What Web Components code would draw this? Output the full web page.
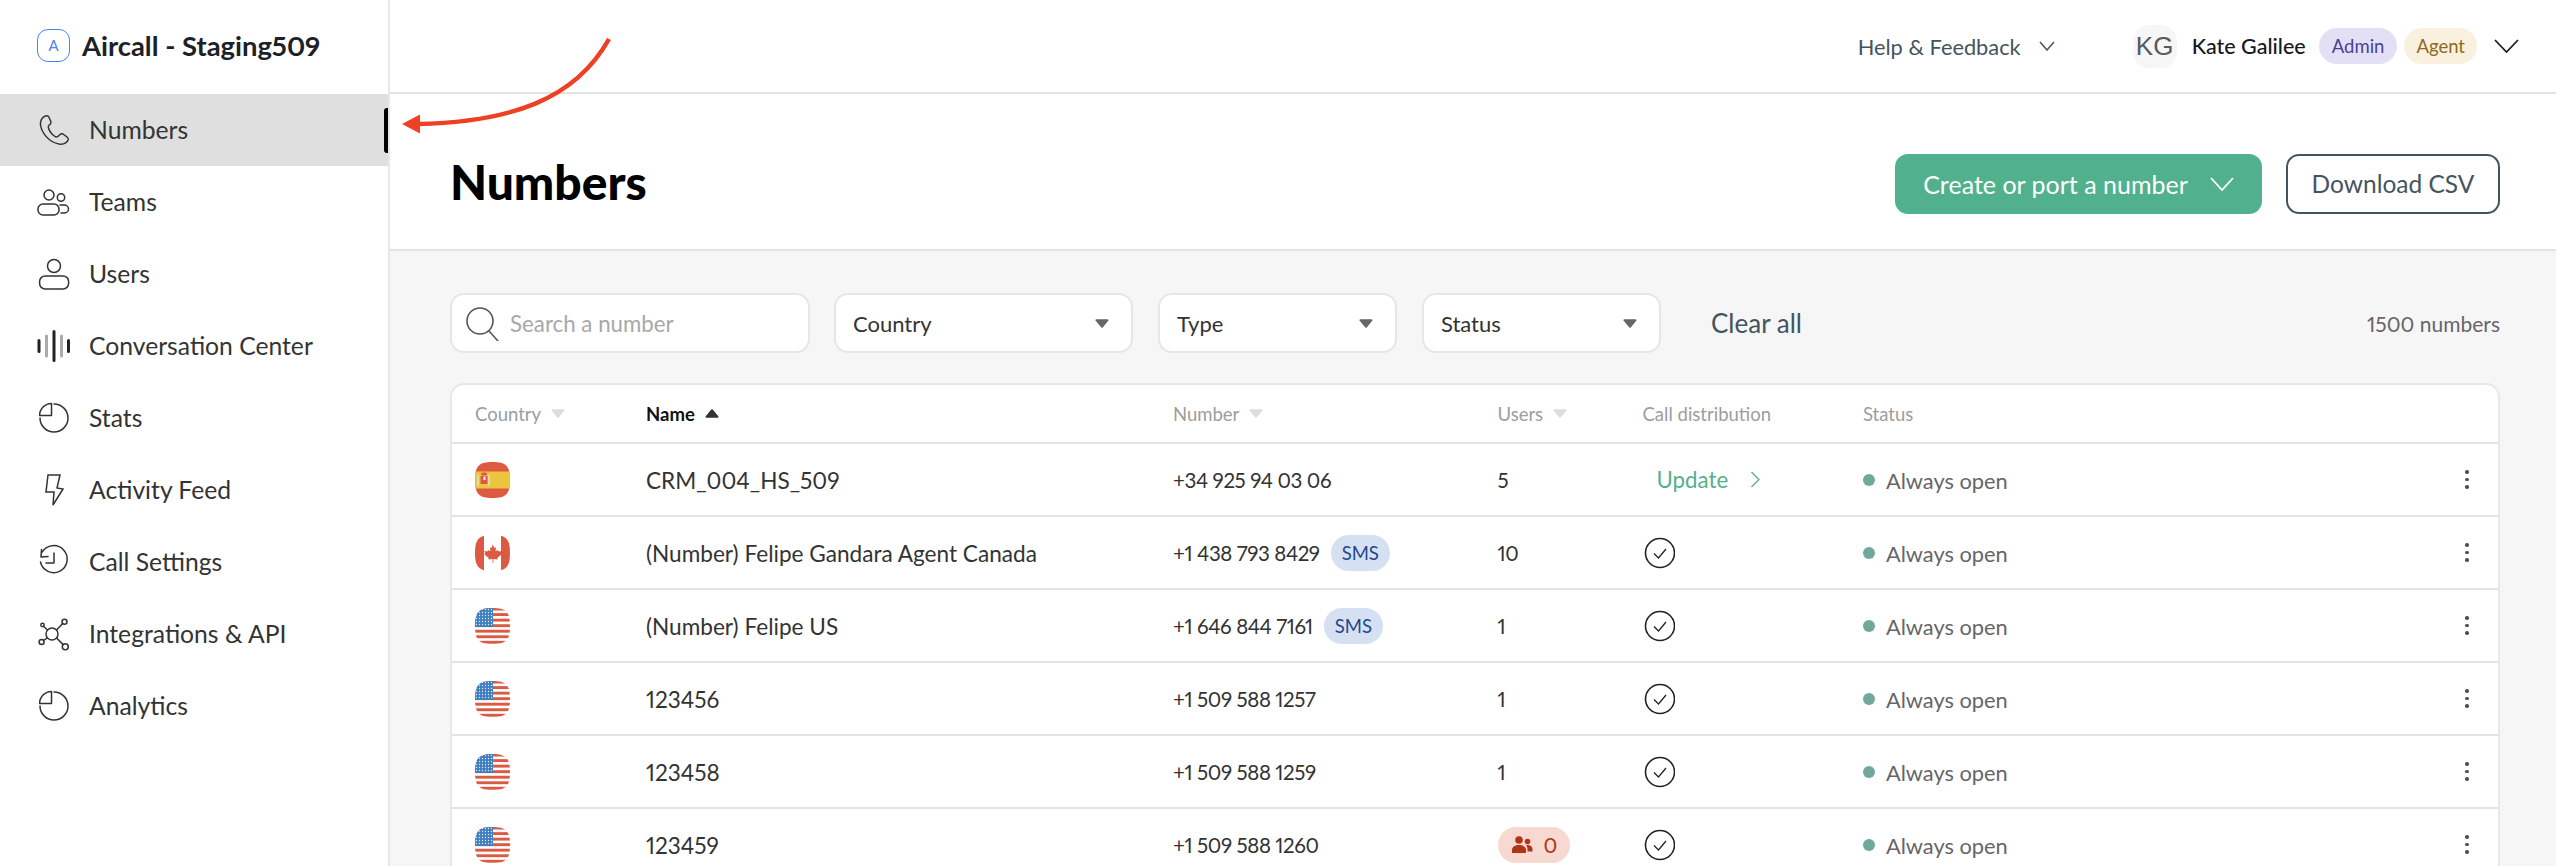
<!DOCTYPE html>
<html lang="en"><head><meta charset="utf-8"><title>Numbers</title>
<style>
html,body{margin:0;padding:0;height:866px;overflow:hidden;background:#fff}
body{font-family:Lato,"Noto Sans",sans-serif;color:#2e3338;font-variant-numeric:proportional-nums}
</style></head>
<body>
<ac-app>
  <ac-sidebar slot="side" brand="Aircall - Staging509">
    <ac-nav-item icon="phone" active>Numbers</ac-nav-item>
    <ac-nav-item icon="teams">Teams</ac-nav-item>
    <ac-nav-item icon="user">Users</ac-nav-item>
    <ac-nav-item icon="wave">Conversation Center</ac-nav-item>
    <ac-nav-item icon="pie">Stats</ac-nav-item>
    <ac-nav-item icon="bolt">Activity Feed</ac-nav-item>
    <ac-nav-item icon="history">Call Settings</ac-nav-item>
    <ac-nav-item icon="nodes">Integrations &amp; API</ac-nav-item>
    <ac-nav-item icon="pie">Analytics</ac-nav-item>
  </ac-sidebar>
  <ac-topbar slot="top"></ac-topbar>
  <ac-page-header slot="main" heading="Numbers"></ac-page-header>
  <ac-filters slot="main" count="1500 numbers"></ac-filters>
  <ac-table slot="main">
    <ac-row flag="es" name="CRM_004_HS_509" number="+34 925 94 03 06" users="5" dist="update"></ac-row>
    <ac-row flag="ca" name="(Number) Felipe Gandara Agent Canada" number="+1 438 793 8429" sms users="10"></ac-row>
    <ac-row flag="us" name="(Number) Felipe US" number="+1 646 844 7161" sms users="1"></ac-row>
    <ac-row flag="us" name="123456" number="+1 509 588 1257" users="1"></ac-row>
    <ac-row flag="us" name="123458" number="+1 509 588 1259" users="1"></ac-row>
    <ac-row flag="us" name="123459" number="+1 509 588 1260" users="0"></ac-row>
  </ac-table>
</ac-app>
<script>
const ICONS = {
  phone:'<path d="M9.5 4C6 5 4 9 4.5 13 5.5 20 12 30 23 32c4 .5 8-1 9.3-4.500.2-1-.3-1.500-1.300-2.500l-4-3c-1-.5-2-.5-3 .5L22.500 24c-1 1-2.500 1-3.500.5-3-2-5.500-5-6.500-8.500-.5-1-.2-2 .5-2.700L14.500 12c.5-1 .5-2 .2-3L12.500 4.500C11.800 3.700 10.500 3.700 9.500 4Z"/>',
  teams:'<circle cx="13" cy="11" r="5"/><circle cx="25" cy="13.500" r="3.700"/><rect x="2" y="20" width="21" height="11" rx="5"/><path d="M24 21h4.500a4 4 0 0 1 0 8H25"/>',
  user:'<circle cx="18" cy="10" r="6.500"/><rect x="3.600" y="20" width="29" height="13" rx="5.500"/>',
  wave:'<g stroke-width="3" stroke-linecap="round"><path d="M3 12.500v11M32.500 12.500v11M18 3.500v29" stroke="#222"/><path d="M10.500 8v20M25.500 8v20" stroke="#aaa"/></g>',
  pie:'<path d="M18 4A14 14 0 1 1 4 18"/><path d="M15.500 3.500A12 12 0 0 0 3.600 15.500H15.500Z"/>',
  bolt:'<path d="M12 3H24L21 16l6 1L17 33l1-13H10Z" stroke-linejoin="miter"/>',
  history:'<path d="M6.200 8A13.500 13.500 0 1 1 4.500 18"/><path d="M5.500 5.500 5 13l7-.5"/><path d="M18 9V19H10"/>',
  nodes:'<circle cx="16" cy="18" r="6"/><circle cx="28.500" cy="5.700" r="2.500"/><circle cx="29.300" cy="30.700" r="3"/><circle cx="5.600" cy="26" r="2.500"/><circle cx="6.500" cy="9" r="1.700"/><path d="M20.500 14l6.200-6.600M20.500 22l6.700 6.600M11.200 21.800 7.600 24.500M11.500 14 7.500 10.200"/>'
};
function def(name, render){
  customElements.define(name, class extends HTMLElement{
    connectedCallback(){
      if(this.shadowRoot) return;
      this.attachShadow({mode:'open'}).innerHTML = render(this);
    }
  });
}
def('ac-icon', el => `<style>:host{display:inline-flex;width:36px;height:36px;flex:none}svg{width:100%;height:100%;display:block;fill:none;stroke:#333;stroke-width:1.500;stroke-linecap:round;stroke-linejoin:round}</style><svg viewBox="0 0 36 36">${ICONS[el.getAttribute('name')]||''}</svg>`);
def('ac-app', () => `<style>
:host{display:grid;grid-template-columns:390px 1fr;grid-template-rows:94px 772px;height:866px;width:2556px;position:relative;overflow:hidden}
::slotted([slot=side]){grid-row:1/3}
.main{background:#f6f6f6;overflow:hidden;display:flex;flex-direction:column}
.arrow{position:absolute;left:0;top:0;width:2556px;height:866px;pointer-events:none}
</style><slot name="side"></slot><slot name="top"></slot><div class="main"><slot name="main"></slot></div>
<svg class="arrow" viewBox="0 0 2556 866"><path d="M609 39C575 100 510 122 418 124" fill="none" stroke="#ee4023" stroke-width="4.500"/><path d="M402 124 420 114.500V133.500Z" fill="#ee4023"/></svg>`);
def('ac-sidebar', el => `<style>
:host{display:block;border-right:2px solid #e8e8e8;box-sizing:border-box;background:#fff}
.brand{height:94px;box-sizing:border-box;padding:0 0 4px 37px;display:flex;align-items:center;gap:12px;font-size:27.400px;font-weight:700;color:#1c2126;white-space:nowrap}
.logo{width:33px;height:33px;box-sizing:border-box;border:1.500px solid #4a86e8;border-radius:11px;display:flex;align-items:center;justify-content:center;color:#4a86e8;font-size:15px;font-weight:400}
nav{display:flex;flex-direction:column}
</style><div class="brand"><span class="logo">A</span><span>${el.getAttribute('brand')}</span></div><nav><slot></slot></nav>`);
def('ac-nav-item', el => `<style>
:host{display:flex;align-items:center;height:72px;box-sizing:border-box;padding:0 0 2px 36px;gap:17px;font-size:24.700px;color:#333;position:relative;${el.hasAttribute('active')?'background:#dfdfdf;':''}}
ac-icon{margin-top:2px}
.bar{position:absolute;right:0;top:14px;height:45px;width:4px;background:#000;border-radius:3px 0 0 3px}
</style><ac-icon name="${el.getAttribute('icon')}"></ac-icon><slot></slot>${el.hasAttribute('active')?'<span class="bar"></span>':''}`);
const chev = (w,h,c,sw=1.500) => `<svg width="${w}" height="${h}" viewBox="0 0 ${w} ${h}" style="flex:none;display:block"><path d="M1 1 ${w/2} ${h-1} ${w-1} 1" fill="none" stroke="${c}" stroke-width="${sw}"/></svg>`;
def('ac-pill', el => `<style>:host{display:inline-flex;align-items:center;justify-content:center;height:36px;border-radius:18px;font-size:18.500px;padding:0 ${el.getAttribute('pad')||13}px;background:${el.getAttribute('bg')};color:${el.getAttribute('fg')};gap:${el.getAttribute('gap')||9}px;flex:none;box-sizing:border-box}</style><slot></slot>`);
def('ac-topbar', () => `<style>
:host{display:flex;align-items:center;justify-content:flex-end;height:94px;box-sizing:border-box;border-bottom:2px solid #e3e3e3;padding-right:37px;background:#fff}
.help{display:flex;align-items:center;gap:18px;font-size:21.800px;color:#44545e;margin-right:78px}
.av{width:44px;height:43px;border-radius:16px;background:#f6f6f6;color:#595959;font:26px "Liberation Sans",sans-serif;display:flex;align-items:center;justify-content:center;margin-right:15px}
.name{font-size:21.500px;color:#14181c;font-weight:500;margin-right:13px}
.g{width:7px;flex:none}.l{width:17px;flex:none}
</style><div class="help"><span>Help &amp; Feedback</span>${chev(16,10,'#44545e')}</div><div class="av">KG</div><span class="name">Kate Galilee</span><ac-pill bg="#e3e0f6" fg="#4a4199">Admin</ac-pill><span class="g"></span><ac-pill bg="#f9f1de" fg="#8f6a20" pad="12">Agent</ac-pill><span class="l"></span>${chev(25,14,'#1c2126',1.800)}`);
def('ac-button', el => `<style>
:host{display:inline-flex;align-items:center;justify-content:center;height:60px;box-sizing:border-box;border-radius:13px;font-size:24.500px;gap:22px;flex:none;width:${el.getAttribute('w')}px}
:host([primary]){background:#52b18d;color:#fff;font-size:25px}
:host(:not([primary])){border:2.500px solid #44545e;color:#44545e;background:#fff}
</style><slot></slot>${el.hasAttribute('primary')?chev(24,14,'#fff',1.800):''}`);
def('ac-page-header', el => `<style>
:host{display:flex;align-items:center;flex:none;height:157px;box-sizing:border-box;border-bottom:2px solid #e3e3e3;background:#fff;padding:24px 56px 0 60px}
h1{margin:0 auto 0 0;font-size:48px;font-weight:900;color:#000;padding-bottom:4px}
.s{width:24px}
</style><h1>${el.getAttribute('heading')}</h1><ac-button primary w="367">Create or port a number</ac-button><span class="s"></span><ac-button w="214">Download CSV</ac-button>`);
const tri = (w,h,c) => `<svg width="${w}" height="${h}" viewBox="0 0 14 9" style="flex:none;display:block"><path d="M1.500 1.200H12.500L7 7.800Z" fill="${c}" stroke="${c}" stroke-width="2" stroke-linejoin="round"/></svg>`;
def('ac-select', el => `<style>
:host{display:flex;align-items:center;justify-content:space-between;width:${el.getAttribute('w')}px;height:60px;box-sizing:border-box;border:2px solid #e6e6e6;border-radius:14px;background:#fff;padding:0 22px 0 17px;font-size:22px;color:#333;flex:none}
</style><slot></slot>${tri(14,9,'#666')}`);
def('ac-filters', el => `<style>
:host{display:flex;align-items:center;flex:none;height:60px;margin:42px 56px 30px 60px;font-size:22.300px}
.search{width:360px;height:60px;box-sizing:border-box;border:2px solid #e6e6e6;border-radius:14px;background:#fff;display:flex;align-items:center;gap:10px;padding-left:12px;color:#a8a8a8;margin-right:24px;flex:none}
.gap{width:25px;flex:none}
.clear{color:#44545e;font-size:26px;margin-left:50px}
.count{margin-left:auto;color:#666;font-size:21px}
</style><div class="search"><svg width="36" height="36" viewBox="0 0 36 36" fill="none" stroke="#555" stroke-width="1.600" stroke-linecap="round"><circle cx="16" cy="16" r="13"/><path d="M25 26l9 10"/></svg><span>Search a number</span></div><ac-select w="299">Country</ac-select><span class="gap"></span><ac-select w="239">Type</ac-select><span class="gap"></span><ac-select w="239">Status</ac-select><span class="clear">Clear all</span><span class="count">${el.getAttribute('count')}</span>`);
const COLS = 'grid-template-columns:171px 527px 324.500px 145px 220.500px 1fr 34px';
def('ac-table', () => {
  const h=(t,s)=>`<span class="${s==='up'?'act':''}">${t}${s==='up'?`<svg class="t" width="14" height="9" viewBox="0 0 14 9"><path d="M1.500 7.800H12.500L7 1.200Z" fill="#333" stroke="#333" stroke-width="2" stroke-linejoin="round"/></svg>`:s?`<svg class="t" width="14" height="9" viewBox="0 0 14 9"><path d="M1.500 1.200H12.500L7 7.800Z" fill="#ddd" stroke="#ddd" stroke-width="2" stroke-linejoin="round"/></svg>`:''}</span>`;
  return `<style>
:host{display:block;flex:none;margin:0 56px 0 60px;background:#fff;border:2px solid #e8e8e8;border-bottom:0;border-radius:14px 14px 0 0;box-sizing:border-box}
.head{display:grid;${COLS};align-items:center;height:59px;padding-left:23px;font-size:18.500px;color:#9d9d9d;border-bottom:2px solid #e3e3e3;box-sizing:border-box}
.head span{display:flex;align-items:center;gap:10px}
.act{color:#111;font-weight:700}
</style><div class="head">${h('Country',1)}${h('Name','up')}${h('Number',1)}${h('Users',1)}${h('Call distribution')}${h('Status')}<span></span></div><slot></slot>`;
});
const FLAG_CLIP='M17.500 0C31 0 35 4 35 18S31 36 17.500 36 0 32 0 18 4 0 17.500 0Z';
const R='#dd5a42';
let uid=0;
function flag(code){
  const id='c'+(++uid);
  let body='';
  if(code==='es') body=`<rect width="35" height="36" fill="${R}"/><rect y="9.500" width="35" height="17" fill="#ecc53f"/><path d="M3 13v11M14 13v11" stroke="#ddd" stroke-width="1.500"/><rect x="5.500" y="14" width="7" height="8" fill="${R}"/><rect x="6" y="10.500" width="6" height="3" rx="1.500" fill="${R}"/><rect x="8.500" y="14.500" width="2" height="3.500" fill="#eee"/>`;
  if(code==='ca') body=`<rect x="0" width="9" height="36" fill="${R}"/><rect x="26" width="9" height="36" fill="${R}"/><path d="M17.500 9.500l2 3.500 1.600-.7-.6 4 2.500-1.300.7 1.500 3-.4-.9 2.500 1 .7-4.500 3.600.4 1.600-4-.6-.3 0v4h-.8v-4l-4.300.6.400-1.600-4.500-3.600 1-.7-.9-2.500 3 .4.700-1.500 2.500 1.300-.6-4 1.600.7Z" fill="${R}"/>`;
  if(code==='us'){
    let st=''; for(let i=0;i<7;i++) st+=`<rect y="${(i*36/6.500).toFixed(2)-0.400}" width="35" height="2.900" fill="${R}"/>`;
    let dots=''; for(let y=1.500;y<18;y+=3) for(let x=1.500;x<18;x+=3) dots+=`<circle cx="${x}" cy="${y}" r=".65" fill="#fff" opacity=".85"/>`;
    body=`${st}<rect width="18" height="19" fill="#3f7fc0"/>${dots}`;
  }
  return `<svg width="35" height="36" viewBox="0 0 35 36" style="display:block"><clipPath id="${id}"><path d="${FLAG_CLIP}"/></clipPath><g clip-path="url(#${id})"><rect width="35" height="36" fill="#fff"/>${body}</g></svg>`;
}
def('ac-row', el => {
  const users=el.getAttribute('users');
  const sms=el.hasAttribute('sms');
  const userCell = users==='0'
    ? `<ac-pill bg="#f7d9d2" fg="#b03416" pad="13" gap="11"><svg width="22" height="18" viewBox="0 0 22 18" fill="#b03416" style="display:block"><circle cx="8" cy="4" r="3.800"/><circle cx="16.500" cy="5.500" r="2.800"/><path d="M1 17v-3c0-3 3-5 7-5s7 2 7 5v3ZM16 9c3 0 5.500 1.500 5.500 4v2.500H16.500V13c0-1.500-.5-3-1.500-3.800Z"/></svg><span style="font-size:21px">0</span></ac-pill>`
    : `<span class="n">${users}</span>`;
  const dist = el.getAttribute('dist')==='update'
    ? `<span class="up">Update<svg width="10" height="17" viewBox="0 0 10 17"><path d="M1.500 1 9 8.500 1.500 16" fill="none" stroke="#52b18d" stroke-width="1.300"/></svg></span>`
    : `<svg class="ck" width="32" height="32" viewBox="0 0 32 32" fill="none" stroke="#222" stroke-width="1.600"><circle cx="17" cy="16" r="14.500"/><path d="M11 16.500l4.500 4.500 7.500-9" stroke-width="1.300"/></svg>`;
  return `<style>
:host{display:grid;${COLS};align-items:center;height:73px;padding-left:23px;font-size:22.600px;color:#333;border-bottom:2px solid #e3e3e3;box-sizing:border-box}
.nm{margin-top:2px;white-space:nowrap}
.num{display:flex;align-items:center;gap:11px}
.n{font-size:20.500px;letter-spacing:-.4px}
.up{display:inline-flex;align-items:center;gap:22px;color:#52b18d;margin-left:14px;font-size:22.300px}
.st{display:flex;align-items:center;gap:11px;color:#666;font-size:21.800px}
.st span:last-child{margin-top:2px}
.dot{width:12px;height:12px;border-radius:50%;background:#71a89c}
.more{display:flex;flex-direction:column;gap:4px;align-items:center;width:6px;justify-self:start}
.more i{width:3.500px;height:3.500px;border-radius:50%;background:#44545e}
.ck{display:block}
</style><div>${flag(el.getAttribute('flag'))}</div><span class="nm">${el.getAttribute('name')}</span>
<div class="num"><span class="n">${el.getAttribute('number')}</span>${sms?'<ac-pill bg="#d5e0f3" fg="#24488b" pad="11">SMS</ac-pill>':''}</div>
<div>${userCell}</div><div>${dist}</div><div class="st"><span class="dot"></span><span>Always open</span></div><div class="more"><i></i><i></i><i></i></div>`;
});
</script>
</body></html>
